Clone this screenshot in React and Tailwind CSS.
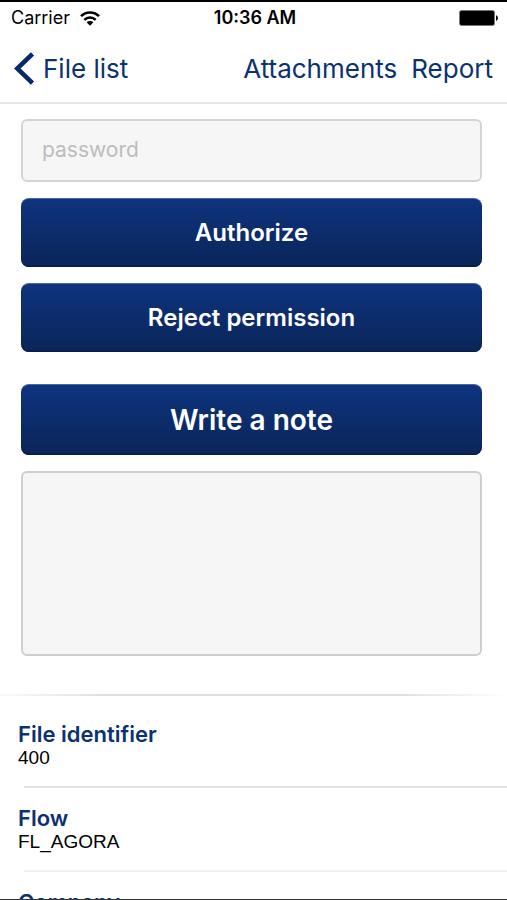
import { useState } from 'react';

const details = [
  { label: 'File identifier', value: '400' },
  { label: 'Flow', value: 'FL_AGORA' },
  { label: 'Company', value: '' },
];

function WifiIcon() {
  return (
    <svg viewBox="0 0 20 15" className="h-[15px] w-5" aria-hidden="true">
      <g fill="none" stroke="#000" strokeWidth="2.5">
        <path d="M1 5.200a12.800 12.800 0 0 1 18 0" />
        <path d="M4.300 8.900a8.100 8.100 0 0 1 11.400 0" />
      </g>
      <path d="M6.600 11.300a4.800 4.800 0 0 1 6.800 0L10 14.800z" />
    </svg>
  );
}

function BatteryIcon() {
  return (
    <svg viewBox="0 0 40 16" className="h-4 w-10" aria-hidden="true">
      <rect x="0.500" y="0.500" width="35" height="15" rx="2" stroke="#777" />
      <path d="M37 5.200c2.600.8 2.600 4.800 0 5.600z" />
    </svg>
  );
}

function StatusBar() {
  return (
    <div className="grid h-8 shrink-0 grid-cols-3 items-center pr-2 pl-[11px] text-lg leading-6">
      <div className="flex items-center gap-[10px]">
        <span>Carrier</span>
        <WifiIcon />
      </div>
      <span className="text-center font-semibold whitespace-nowrap">
        10:36 AM
      </span>
      <div className="flex justify-end">
        <BatteryIcon />
      </div>
    </div>
  );
}

function NavBar() {
  return (
    <nav className="flex h-[70px] shrink-0 items-center justify-between border-b-2 border-[#e6e6e6] px-[14px] pt-px text-[26px] leading-8 text-[#0b3270]">
      <a href="#files" className="flex items-center gap-2">
        <svg viewBox="0 0 21 33" className="h-[33px] w-[21px]" aria-hidden="true">
          <path
            d="M18.500 1.800L3.200 16.500l15.300 14.700"
            fill="none"
            stroke="#06296a"
            strokeWidth="4.600"
          />
        </svg>
        File list
      </a>
      <div className="flex gap-[14px]">
        <a href="#attachments">Attachments</a>
        <a href="#report">Report</a>
      </div>
    </nav>
  );
}

function ActionButton({ children, large }) {
  return (
    <button
      type="button"
      className={`w-full rounded-lg border-t border-[#4766a3] bg-linear-to-b from-[#0e347f] to-[#0a2558] font-semibold text-white shadow-[inset_0_-1px_1px_#071b45] ${
        large ? 'h-[71px] text-[28px]' : 'h-[69px] text-[24px]'
      }`}
    >
      {children}
    </button>
  );
}

export default function App() {
  const [password, setPassword] = useState('');
  const [note, setNote] = useState('');

  return (
    <div className="flex h-screen flex-col overflow-hidden border-t-2 border-b border-t-black border-b-[#333] bg-white font-[Inter,sans-serif] text-black">
      <StatusBar />
      <NavBar />

      <main className="min-h-0 flex-1 overflow-y-auto [scrollbar-width:none]">
        <form className="flex flex-col gap-4 pt-[15px] pr-[25px] pl-[21px]">
          <input
            type="password"
            aria-label="password"
            placeholder="password"
            value={password}
            onChange={(e) => setPassword(e.target.value)}
            className="h-[63px] w-full rounded-md border-2 border-[#d4d4d4] bg-[#f6f6f6] px-[19px] pb-[2px] text-[21px] placeholder:text-[#bcbcbe]"
          />
          <ActionButton>Authorize</ActionButton>
          <ActionButton>Reject permission</ActionButton>
          <div className="pt-4">
            <ActionButton large>Write a note</ActionButton>
          </div>
          <textarea
            aria-label="Note"
            value={note}
            onChange={(e) => setNote(e.target.value)}
            className="block h-[185px] w-full resize-none rounded-md border-2 border-[#cecece] bg-[#f6f6f6] p-4 text-[21px]"
          />
        </form>

        <div className="mt-[38px] h-[2px] bg-[linear-gradient(to_right,#fafafa,#dcdfde_22%,#dcdfde_78%,#ffffff)]" />

        <dl className="pt-2">
          {details.map((item) => (
            <div key={item.label} className="group">
              <div className="h-[82px] pt-[18px] pl-[18px]">
                <dt className="text-[22px] leading-6 font-semibold text-[#0b3270]">
                  {item.label}
                </dt>
                <dd className="font-['Liberation_Sans',Arial,sans-serif] text-[19px] leading-6">
                  {item.value}
                </dd>
              </div>
              <div className="ml-6 h-[2px] bg-[#f1f1f1] group-first:bg-[#e2e2e2]" />
            </div>
          ))}
        </dl>
      </main>
    </div>
  );
}
